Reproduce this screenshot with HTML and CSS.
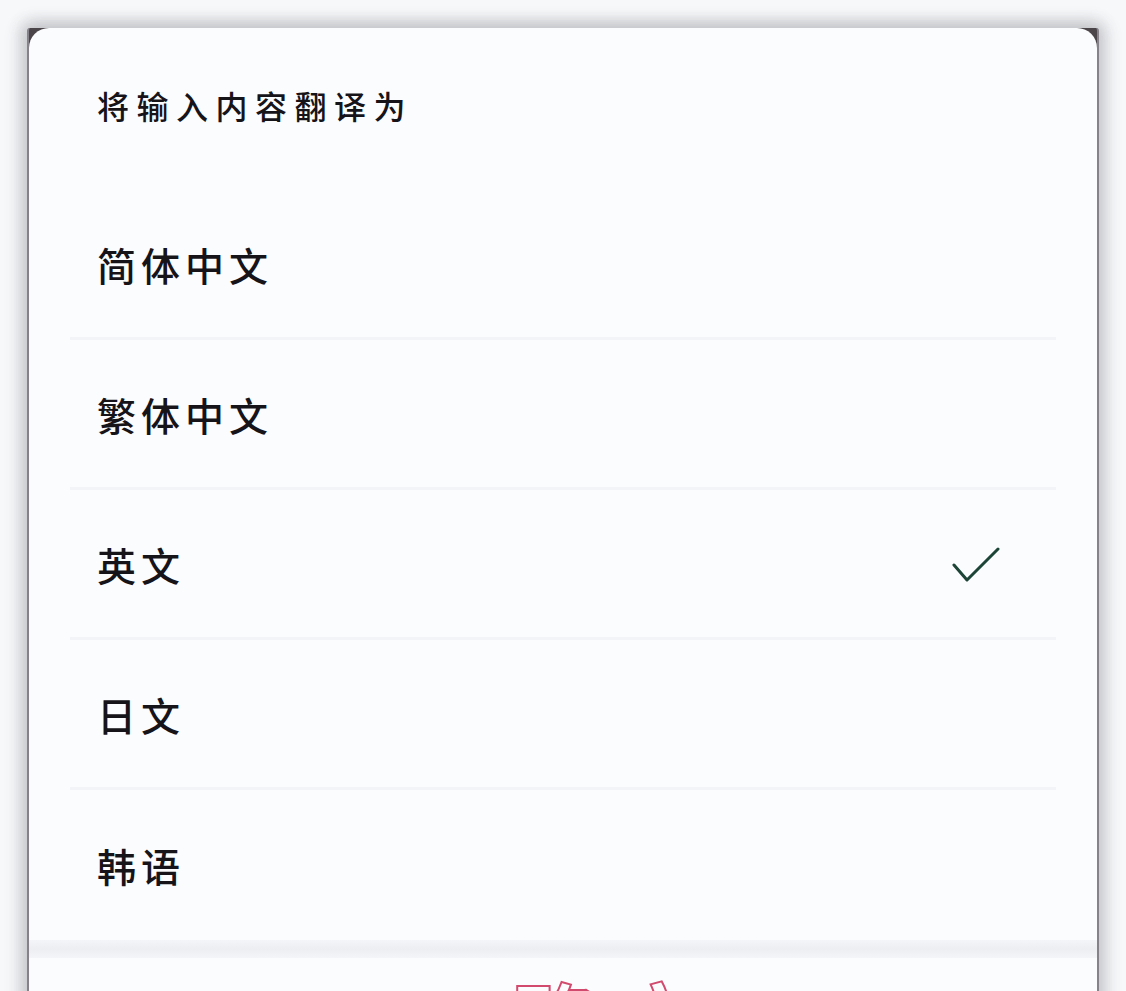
FILE: index.html
```html
<!DOCTYPE html>
<html lang="zh-CN">
<head>
<meta charset="utf-8">
<title>将输入内容翻译为</title>
<link rel="stylesheet" href="styles.css">
</head>
<body>
<div class="shell">
  <div class="card">
    <div class="title">将输入内容翻译为</div>
    <ul class="list">
      <li class="row"><span class="label">简体中文</span></li>
      <li class="row"><span class="label">繁体中文</span></li>
      <li class="row selected"><span class="label">英文</span>
        <svg class="check" width="50" height="40" viewBox="0 0 50 40"><polyline points="3,18 16,33 47,2" fill="none" stroke="#1c4437" stroke-width="3" stroke-linecap="round" stroke-linejoin="round"/></svg>
      </li>
      <li class="row"><span class="label">日文</span></li>
      <li class="row last"><span class="label">韩语</span></li>
    </ul>
    <div class="band"></div>
    <div class="footer"><span class="action">确定</span></div>
  </div>
</div>
</body>
</html>
```
FILE: styles.css
```css
html, body {
  margin: 0;
  padding: 0;
  height: 991px;
  overflow: hidden;
}
body {
  background: #f7f8fa;
  font-family: "Noto Sans CJK SC", "Noto Sans", sans-serif;
  color: #161418;
}
.shell {
  margin: 28px 27px 0 27px;
  background: #4b4549;
  border-left: 2px solid #85828a;
  border-right: 2px solid #85828a;
  border-radius: 3px 3px 0 0;
  box-shadow: 0 -4px 16px 4px rgba(70, 72, 80, 0.13), -5px 0 16px 4px rgba(70, 72, 80, 0.12), 5px 0 16px 4px rgba(70, 72, 80, 0.12);
}
.card {
  background: #fbfcfe;
  border-radius: 20px 20px 0 0;
  height: 1000px;
  overflow: hidden;
}
.title {
  height: 162px;
  box-sizing: border-box;
  padding: 59px 0 0 68px;
  font-size: 32px;
  line-height: 36px;
  letter-spacing: 7.5px;
  font-weight: 500;
}
.list {
  list-style: none;
  margin: 0;
  padding: 0;
}
.row {
  height: 150px;
  box-sizing: border-box;
  margin: 0 41px;
  padding: 0 55px 0 27px;
  display: flex;
  align-items: center;
  justify-content: space-between;
  border-bottom: 3px solid #f3f4f7;
}
.row.last {
  border-bottom: 0;
}
.label {
  font-size: 39px;
  line-height: 44px;
  letter-spacing: 5px;
  font-weight: 500;
}
.check {
  display: block;
  margin-top: 6px;
}
.band {
  height: 18px;
  background: linear-gradient(#f4f5f8, #eceef1 50%, #f4f5f8);
}
.footer {
  padding: 17px 0 0 100px;
  text-align: center;
}
.action {
  font-size: 92px;
  line-height: 1;
  letter-spacing: 8px;
  font-weight: 700;
  color: transparent;
  -webkit-text-stroke: 2px #d24a6e;
}
```
